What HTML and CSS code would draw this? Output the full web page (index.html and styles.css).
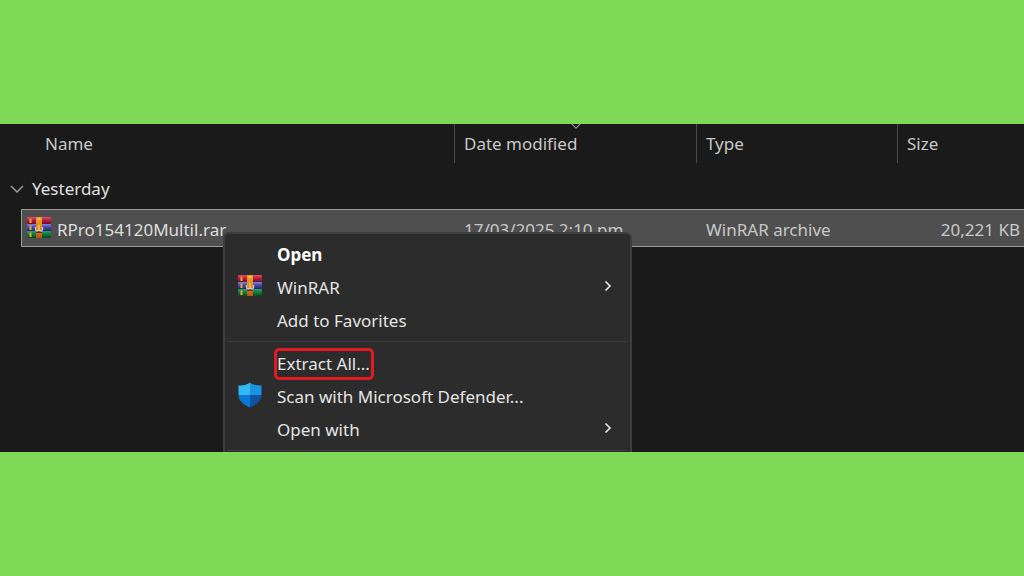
FILE: index.html
```html
<!DOCTYPE html>
<html lang="en">
<head>
    <meta charset="UTF-8">
    <meta name="viewport" content="width=device-width, initial-scale=1.0">
    <title>File Explorer</title>
    <link rel="stylesheet" href="styles.css">
</head>
<body>
    <!-- Shared icons -->
    <svg class="icon-defs" aria-hidden="true">
        <defs>
            <linearGradient id="book-red" x1="0" y1="0" x2="0" y2="1">
                <stop offset="0" stop-color="#e0506c"/>
                <stop offset="0.4" stop-color="#c41f45"/>
                <stop offset="1" stop-color="#6d0c28"/>
            </linearGradient>
            <linearGradient id="book-blue" x1="0" y1="0" x2="0" y2="1">
                <stop offset="0" stop-color="#8386d8"/>
                <stop offset="0.4" stop-color="#4a4cae"/>
                <stop offset="1" stop-color="#25256a"/>
            </linearGradient>
            <linearGradient id="book-green" x1="0" y1="0" x2="0" y2="1">
                <stop offset="0" stop-color="#2fa05a"/>
                <stop offset="0.4" stop-color="#128040"/>
                <stop offset="1" stop-color="#07481f"/>
            </linearGradient>
            <linearGradient id="belt" x1="0" y1="0" x2="0" y2="1">
                <stop offset="0" stop-color="#e8a02c"/>
                <stop offset="0.5" stop-color="#e08a1c"/>
                <stop offset="1" stop-color="#b8500c"/>
            </linearGradient>
            <symbol id="icon-rar" viewBox="0 0 24 22">
                <rect x="0" y="0" width="24" height="7" rx="1" fill="url(#book-red)"/>
                <rect x="0" y="7" width="24" height="7" rx="1" fill="url(#book-blue)"/>
                <rect x="0" y="14" width="24" height="7" rx="1" fill="url(#book-green)"/>
                <path d="M2.500 1.500h2v4.500h-2zM2.500 8.500h2V13h-2zM2.500 15.500h2V20h-2z" fill="#e8a832"/>
                <rect x="9" y="0" width="6" height="21" fill="url(#belt)"/>
                <path d="M10.500 1h3v2h-3z" fill="#f7c044"/>
                <path d="M9 14h6v2H9z" fill="#6b2a12"/>
                <path d="M8.500 10v2.500q0 1.500 1.500 1.500t2-1.500q.5 1.500 2 1.500t1.500-1.500V10" fill="none" stroke="#c8ccd4" stroke-width="1.300"/>
                <path d="M12 8v4" stroke="#f5b040" stroke-width="2"/>
            </symbol>
            <symbol id="icon-shield" viewBox="0 0 24 26">
                <path d="M12 0.500C9 3 5 3.500 0.500 3.500V13H12z" fill="#32b9f1"/>
                <path d="M12 0.500c3 2.500 7 3 11.500 3V13H12z" fill="#1795e0"/>
                <path d="M0.500 13c0 6 5.500 10 11.500 12.500V13z" fill="#0b78d4"/>
                <path d="M23.500 13c0 6-5.500 10-11.500 12.500V13z" fill="#0c559f"/>
            </symbol>
            <symbol id="icon-chevron-down" viewBox="0 0 14 8">
                <path d="M1 1l6 6 6-6" fill="none" stroke="currentColor" stroke-width="1.500"/>
            </symbol>
            <symbol id="icon-chevron-right" viewBox="0 0 8 12">
                <path d="M1.500 1.500L6 6l-4.500 4.500" fill="none" stroke="currentColor" stroke-width="1.700"/>
            </symbol>
        </defs>
    </svg>

    <main class="explorer">
        <table class="file-table">
            <colgroup>
                <col class="col-name">
                <col class="col-date">
                <col class="col-type">
                <col class="col-size">
            </colgroup>
            <thead>
                <tr>
                    <th scope="col">Name</th>
                    <th scope="col">Date modified
                        <svg class="sort-arrow" aria-hidden="true"><use href="#icon-chevron-down"/></svg>
                    </th>
                    <th scope="col">Type</th>
                    <th scope="col">Size</th>
                </tr>
            </thead>
            <tbody>
                <tr class="group-row">
                    <th colspan="4" scope="rowgroup">
                        <button class="group-toggle" type="button" aria-expanded="true">
                            <svg class="group-arrow" aria-hidden="true"><use href="#icon-chevron-down"/></svg>
                            Yesterday
                        </button>
                    </th>
                </tr>
                <tr class="file-row">
                    <td>
                        <div class="file-name">
                            <svg class="rar-icon" aria-hidden="true"><use href="#icon-rar"/></svg>
                            RPro154120Multil.rar
                        </div>
                    </td>
                    <td>17/03/2025 2:10 pm</td>
                    <td>WinRAR archive</td>
                    <td class="file-size">20,221 KB</td>
                </tr>
            </tbody>
        </table>

        <div class="context-menu">
            <button class="menu-item default" type="button">
                <span class="menu-icon"></span>
                <span class="menu-label">Open</span>
            </button>
            <button class="menu-item" type="button">
                <span class="menu-icon"><svg class="rar-icon" aria-hidden="true"><use href="#icon-rar"/></svg></span>
                <span class="menu-label">WinRAR</span>
                <svg class="submenu-arrow" aria-hidden="true"><use href="#icon-chevron-right"/></svg>
            </button>
            <button class="menu-item" type="button">
                <span class="menu-icon"></span>
                <span class="menu-label">Add to Favorites</span>
            </button>
            <hr class="menu-separator">
            <button class="menu-item" type="button">
                <span class="menu-icon"></span>
                <span class="menu-label highlight">Extract All...</span>
            </button>
            <button class="menu-item" type="button">
                <span class="menu-icon"><svg class="shield-icon" aria-hidden="true"><use href="#icon-shield"/></svg></span>
                <span class="menu-label">Scan with Microsoft Defender...</span>
            </button>
            <button class="menu-item" type="button">
                <span class="menu-icon"></span>
                <span class="menu-label">Open with</span>
                <svg class="submenu-arrow" aria-hidden="true"><use href="#icon-chevron-right"/></svg>
            </button>
            <hr class="menu-separator">
        </div>
    </main>
</body>
</html>
```
FILE: styles.css
```css
/* Base styling */
* {
    box-sizing: border-box;
}

body {
    margin: 0;
    min-height: 100vh;
    padding: 124px 0;
    display: flex;
    flex-direction: column;
    background-color: #7ed957;
    font-family: "Noto Sans", "Open Sans", sans-serif;
    font-size: 17px;
    line-height: 24px;
}

button {
    border: none;
    background: none;
    color: inherit;
    font: inherit;
    cursor: pointer;
}

.icon-defs {
    position: absolute;
    width: 0;
    height: 0;
}

.explorer {
    flex: 1;
    position: relative;
    overflow: hidden;
    background-color: #1a1a1a;
    color: #c8c8c8;
}

/* File list */
.file-table {
    width: 100%;
    padding-left: 21px;
    table-layout: fixed;
    border-collapse: separate;
    border-spacing: 0;
}

.col-name {
    width: 433px;
}

.col-date {
    width: 242px;
}

.col-type {
    width: 201px;
}

.file-table th,
.file-table td {
    padding: 0 9px;
    font-weight: normal;
    text-align: left;
    white-space: nowrap;
}

.file-table thead th {
    position: relative;
    height: 39px;
    border-left: 1px solid #4a4a4a;
}

.file-table thead th:first-child {
    padding-left: 24px;
    border-left: none;
}

.sort-arrow {
    position: absolute;
    top: -1px;
    left: 116px;
    width: 10px;
    height: 6px;
    color: #999;
}

.file-table .group-row th {
    height: 46px;
    padding: 6px 0 0;
    color: #e0e0e0;
}

.group-toggle {
    display: flex;
    align-items: center;
    gap: 8px;
    margin-left: -11px;
    padding: 0;
}

.group-arrow {
    width: 14px;
    height: 8px;
    color: #999;
}

.file-table .file-row td {
    height: 38px;
    padding-top: 3px;
    border-top: 1px solid #9a9a9a;
    border-bottom: 1px solid #9a9a9a;
    background-color: #4f4f4f;
}

.file-table .file-row td:first-child {
    padding-left: 5px;
    border-left: 1px solid #9a9a9a;
}

.file-table .file-row td + td {
    padding-left: 10px;
}

.file-table .file-row .file-size {
    padding-right: 4px;
    text-align: right;
}

.file-name {
    display: flex;
    align-items: center;
    gap: 6px;
    color: #dedede;
}

.rar-icon {
    width: 24px;
    height: 22px;
}

.file-name .rar-icon {
    margin-bottom: 3px;
}

/* Context menu */
.context-menu {
    position: absolute;
    top: 108px;
    left: 223px;
    width: 409px;
    padding: 5px 3px;
    border: 2px solid #3d3d3d;
    border-radius: 6px;
    background-color: #2c2c2c;
    color: #e4e4e4;
}

.menu-item {
    display: flex;
    align-items: center;
    width: 100%;
    height: 33px;
    padding: 0 15px 2px 10px;
    text-align: left;
}

.menu-item.default {
    color: #fff;
    font-weight: bold;
}

.menu-icon {
    display: flex;
    width: 39px;
    padding-bottom: 4px;
}

.shield-icon {
    width: 24px;
    height: 26px;
}

.menu-label.highlight {
    margin-left: -3px;
    padding: 1px 1px 1px 0;
    border: 3px solid #e01b22;
    border-radius: 5px;
}

.submenu-arrow {
    width: 8px;
    height: 12px;
    margin-left: auto;
    margin-bottom: 4px;
}

.menu-separator {
    height: 1px;
    margin: 3px 0 6px;
    border: none;
    background-color: #3d3d3d;
}
```
